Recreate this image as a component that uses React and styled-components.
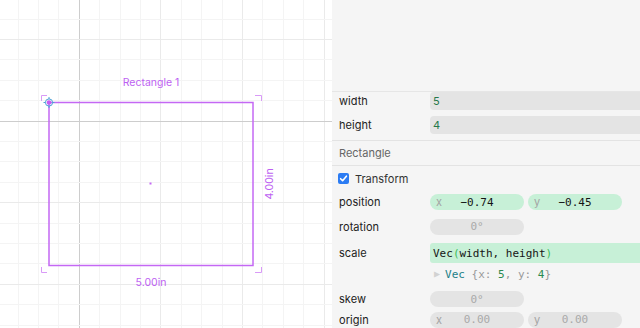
import React from 'react';
import styled, { createGlobalStyle } from 'styled-components';

const GlobalStyle = createGlobalStyle`
  html, body {
    margin: 0;
    padding: 0;
    background: #ffffff;
  }
  body {
    font-family: Inter, "Liberation Sans", sans-serif;
  }
`;

const Page = styled.div`
  display: flex;
  width: 640px;
  height: 328px;
  overflow: hidden;
`;

const CanvasArea = styled.div`
  flex: 0 0 332px;
  height: 328px;
  background: #ffffff;
`;

const Panel = styled.aside`
  flex: 0 0 308px;
  height: 328px;
  overflow: hidden;
  background: #f5f5f5;
  color: #1d1d1d;
  font-size: 11px;
`;

const PanelTop = styled.div`
  height: 91px;
  border-bottom: 1px solid #e6e6e6;
`;

const Row = styled.div`
  display: grid;
  grid-template-columns: 91px 1fr;
  align-items: center;
  height: ${({ h }) => h}px;
  margin-top: ${({ mt = 0 }) => mt}px;
  padding-left: 7px;
`;

const Label = styled.span`
  color: #222;
  letter-spacing: 0.05px;
`;

const TextField = styled.div`
  height: 18px;
  display: flex;
  align-items: center;
  padding-left: 3px;
  background: #e4e4e4;
  border-radius: 4px 0 0 4px;
  color: #26784a;
`;

const Divider = styled.div`
  height: 1px;
  background: #e3e3e3;
`;

const Section = styled.div`
  height: 24px;
  display: flex;
  align-items: center;
  padding-left: 7px;
  color: #666;
`;

const CheckRow = styled.label`
  height: 24px;
  display: flex;
  align-items: center;
  gap: 6px;
  padding-left: 6px;
  padding-top: 1px;
  box-sizing: border-box;
  color: #333;
`;

const Check = styled.span`
  width: 11px;
  height: 11px;
  border-radius: 2px;
  background: #2c7cf3;
  display: flex;
  align-items: center;
  justify-content: center;
`;

const Pills = styled.div`
  display: flex;
  gap: 4px;
`;

const Pill = styled.div`
  width: 94px;
  height: 16px;
  border-radius: 8px;
  background: ${({ active }) => (active ? '#c7f0d7' : '#e4e4e4')};
  display: grid;
  grid-template-columns: 1fr auto 1fr;
  align-items: center;
  padding: 0 6px;
  box-sizing: border-box;
  font-family: "DejaVu Sans Mono", "Liberation Mono", monospace;
  font-size: 11px;
  color: ${({ active }) => (active ? '#151515' : '#a9a9a9')};
`;

const PillAxis = styled.span`
  color: #a3a3a3;
  font-family: Inter, "Liberation Sans", sans-serif;
  font-size: 11px;
`;

const CodeField = styled.div`
  height: 20px;
  display: flex;
  align-items: center;
  padding-left: 3px;
  background: #c7f0d7;
  border-radius: 3px 0 0 3px;
  font-family: "DejaVu Sans Mono", "Liberation Mono", monospace;
  font-size: 11px;
  color: #151515;
`;

const Paren = styled.span`
  color: #3cbc5c;
`;

const Preview = styled.div`
  display: flex;
  align-items: center;
  gap: 5px;
  padding-left: 4px;
  font-family: "DejaVu Sans Mono", "Liberation Mono", monospace;
  font-size: 11px;
  color: #999;
`;

const Caret = styled.span`
  color: #d2d2d2;
  font-size: 10px;
  line-height: 1;
`;

const Tok = styled.span`
  color: ${({ c }) => c};
`;

const CELL = 20.4;
const OX = 79.3;
const OY = 121;
const PURPLE = '#c468f4';
const LIGHT = '#d99af7';

const px = (v) => Math.floor(v) + 0.5;

const Grid = () => {
  const lines = [];
  for (let k = -4; k <= 13; k++) {
    const x = OX + k * CELL;
    if (x < 0 || x > 332) continue;
    const stroke = k === 0 ? '#cdcdcd' : k % 4 === 0 ? '#eaeaea' : '#f4f4f4';
    lines.push(<line key={`v${k}`} x1={px(x)} y1={0} x2={px(x)} y2={328} stroke={stroke} />);
  }
  for (let k = -6; k <= 11; k++) {
    const y = OY + k * CELL;
    if (y < 0 || y > 328) continue;
    const stroke = k === 0 ? '#cdcdcd' : k % 4 === 0 ? '#eaeaea' : '#f4f4f4';
    lines.push(<line key={`h${k}`} x1={0} y1={px(y)} x2={332} y2={px(y)} stroke={stroke} />);
  }
  return <g>{lines}</g>;
};

const Bracket = ({ d }) => <path d={d} fill="none" stroke={LIGHT} strokeWidth="1" />;

const Canvas = () => (
  <svg width="332" height="328" viewBox="0 0 332 328">
    <Grid />
    <Bracket d="M41.5 101 V95.5 H47" />
    <Bracket d="M255 95.5 H261.5 V101" />
    <Bracket d="M41.5 267 V272.5 H47" />
    <Bracket d="M255 272.5 H261.5 V267" />
    <rect x="49" y="102.5" width="204" height="163" fill="none" stroke={PURPLE} strokeWidth="1.5" />
    <rect x="149.5" y="182.5" width="2" height="2" fill={PURPLE} />
    <g fontFamily="Inter, 'Liberation Sans', sans-serif" fontSize="10.5" fill="#bd5ff2" textAnchor="middle">
      <text x="151" y="86">Rectangle 1</text>
      <text x="151" y="285.5">5.00in</text>
      <text transform="translate(272.5 184) rotate(-90)">4.00in</text>
    </g>
    <g>
      <circle cx="49" cy="102.5" r="3.6" fill="none" stroke="#4ea2d6" strokeWidth="1" />
      <path d="M49 97 V99 M49 106 V108 M43.5 102.5 H45.5 M52.5 102.5 H54.5" stroke="#4ea2d6" strokeWidth="1" />
      <circle cx="49" cy="102.5" r="2.3" fill="#c65cf2" />
    </g>
  </svg>
);

const CheckMark = () => (
  <svg width="9" height="9" viewBox="0 0 9 9">
    <path d="M1.6 4.7 L3.6 6.7 L7.4 2.2" fill="none" stroke="#fff" strokeWidth="1.6" strokeLinecap="round" strokeLinejoin="round" />
  </svg>
);

const App = () => (
  <Page>
    <GlobalStyle />
    <CanvasArea>
      <Canvas />
    </CanvasArea>
    <Panel>
      <PanelTop />
      <Row h={18}>
        <Label>width</Label>
        <TextField>5</TextField>
      </Row>
      <Row h={18} mt={6}>
        <Label>height</Label>
        <TextField>4</TextField>
      </Row>
      <Row h={6} />
      <Divider />
      <Section>Rectangle</Section>
      <Divider />
      <CheckRow>
        <Check>
          <CheckMark />
        </Check>
        Transform
      </CheckRow>
      <Row h={24}>
        <Label>position</Label>
        <Pills>
          <Pill active>
            <PillAxis>x</PillAxis>
            <span>−0.74</span>
            <span />
          </Pill>
          <Pill active>
            <PillAxis>y</PillAxis>
            <span>−0.45</span>
            <span />
          </Pill>
        </Pills>
      </Row>
      <Row h={25}>
        <Label>rotation</Label>
        <Pills>
          <Pill>
            <span />
            <span>0°</span>
            <span />
          </Pill>
        </Pills>
      </Row>
      <Row h={28}>
        <Label>scale</Label>
        <CodeField>
          Vec<Paren>(</Paren>width, height<Paren>)</Paren>
        </CodeField>
      </Row>
      <Row h={14}>
        <span />
        <Preview>
          <Caret>▶</Caret>
          <span>
            <Tok c="#1c7f88">Vec</Tok> {'{'}x: <Tok c="#2a8a4e">5</Tok>, y: <Tok c="#2a8a4e">4</Tok>
            {'}'}
          </span>
        </Preview>
      </Row>
      <Row h={24} mt={6}>
        <Label>skew</Label>
        <Pills>
          <Pill>
            <span />
            <span>0°</span>
            <span />
          </Pill>
        </Pills>
      </Row>
      <Row h={17}>
        <Label>origin</Label>
        <Pills>
          <Pill>
            <PillAxis>x</PillAxis>
            <span>0.00</span>
            <span />
          </Pill>
          <Pill>
            <PillAxis>y</PillAxis>
            <span>0.00</span>
            <span />
          </Pill>
        </Pills>
      </Row>
    </Panel>
  </Page>
);

export default App;
